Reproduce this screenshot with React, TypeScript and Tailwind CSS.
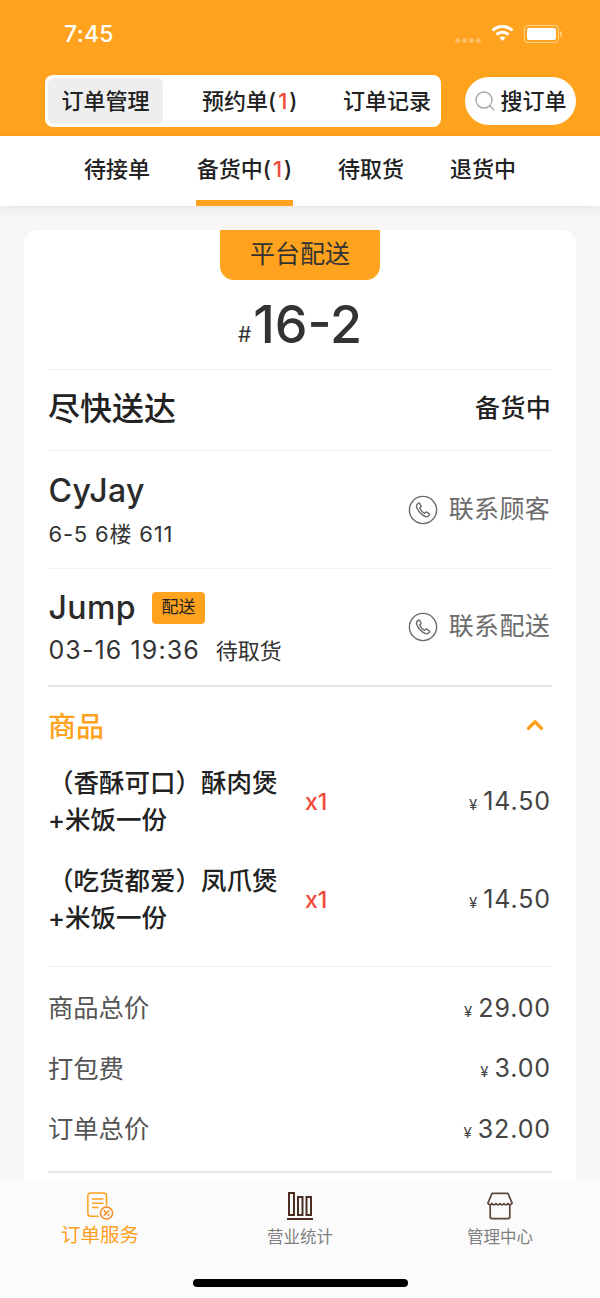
import React from 'react';
import { ChevronUp } from 'lucide-react';

const FONT = "font-['Inter','Noto_Sans_CJK_SC',sans-serif]";

function PhoneIcon() {
  return (
    <svg width="30" height="30" viewBox="0 0 30 30" fill="none" stroke="#6b6b6b" strokeWidth="1.4">
      <circle cx="15" cy="15" r="13.6" />
      <path d="M10.6 8.2c-1.6.8-2.4 2-2 3.7.8 3.6 4.900 8 8.500 9.500 1.700.7 3.300.2 4.300-1.300.3-.5.200-1-.2-1.300l-2.400-1.600c-.5-.3-.9-.2-1.300.2l-.9 1c-2.200-.9-4-3-4.900-5.300l1-.8c.4-.3.500-.8.300-1.200l-1.300-2.600c-.2-.4-.6-.5-1.100-.3z" strokeLinejoin="round" />
    </svg>
  );
}

function Price({ value, className = '' }: { value: string; className?: string }) {
  return (
    <span className={`text-[25px] tracking-[0.9px] pr-[1px] text-[#444] ${className}`}>
      <span className="text-[15px] mr-[5px]">¥</span>
      {value}
    </span>
  );
}

function ContactRow({ label }: { label: string }) {
  return (
    <div className="flex items-center gap-[11px] pr-[2px] text-[25px] tracking-[0.3px] text-[#6b6b6b]">
      <PhoneIcon />
      <span>{label}</span>
    </div>
  );
}

function GoodsItem({ line1, line2 }: { line1: string; line2: string }) {
  return (
    <div className="flex items-center h-[98px]">
      <div className="w-[257px] -mt-[2px] text-[25.500px] leading-[37px] font-medium text-[#222]">
        <div>{line1}</div>
        <div>{line2}</div>
      </div>
      <span className="text-[23px] font-medium text-[#f0493a]">x1</span>
      <Price value="14.50" className="ml-auto" />
    </div>
  );
}

function TotalRow({ label, value }: { label: string; value: string }) {
  return (
    <div className="flex items-center justify-between h-[60.500px] text-[25.300px] text-[#555]">
      <span>{label}</span>
      <Price value={value} />
    </div>
  );
}

function OrderIcon() {
  return (
    <svg width="28" height="28" viewBox="0 0 30 30" fill="none" stroke="#ff9f1e" strokeWidth="1.600" strokeLinecap="round">
      <path d="M13 26H5a3 3 0 0 1-3-3V4a3 3 0 0 1 3-3h14a3 3 0 0 1 3 3v10" />
      <path d="M7 7.500h11M7 12h11M7 16.500h6" />
      <circle cx="22" cy="22.500" r="6.500" stroke="#f58a1f" />
      <path d="M19.500 20l5 5M24.500 20l-5 5" stroke="#f58a1f" />
    </svg>
  );
}

function StatsIcon() {
  return (
    <svg width="26" height="28" viewBox="0 0 26 28" fill="none" stroke="#4a2e22" strokeWidth="2">
      <rect x="2" y="1" width="5" height="22" />
      <rect x="11" y="5" width="4.500" height="18" />
      <rect x="19.500" y="5" width="4.500" height="18" />
      <path d="M0 27h26" />
    </svg>
  );
}

function ShopIcon() {
  return (
    <svg width="28" height="28" viewBox="0 0 30 30" fill="none" stroke="#5c463c" strokeWidth="1.800" strokeLinejoin="round">
      <path d="M6.500 1.500h17l4.500 10.500c-1.200 2-3 2-4.400.4-1.500 1.800-3.200 1.800-4.300 0-1.300 1.800-3.100 1.800-4.300 0-1.300 1.800-3.100 1.800-4.300 0-1.300 1.800-3.100 1.800-4.400-.1C5 14 3.200 14 2 12z" />
      <path d="M4.500 14v12.500a2 2 0 0 0 2 2h17a2 2 0 0 0 2-2V14" />
    </svg>
  );
}

function TabBarItem({ icon, label, active }: { icon: React.ReactNode; label: string; active?: boolean }) {
  return (
    <div className="flex flex-col items-center w-[200px]">
      <div className="h-[29px]">{icon}</div>
      <span className={active ? 'text-[19.500px] leading-[28px] text-[#ff9f1e]' : 'text-[16.500px] leading-[26px] mt-[3px] text-[#808080]'}>
        {label}
      </span>
    </div>
  );
}

export default function App() {
  return (
    <div className={`${FONT} w-[600px] h-[1298px] flex flex-col overflow-hidden bg-[#f6f6f6]`}>
      <header className="h-[136px] shrink-0 bg-[#ffa21d]">
        <div className="h-[75px] pl-[64px] pr-[38px] pt-[19px] flex items-start justify-between text-white">
          <span className="text-[23px] leading-[30px] font-medium tracking-[0.3px]">7:45</span>
          <div className="flex items-center gap-[10px] h-[30px]">
            <div className="flex gap-[2px] mt-[13px]">
              <i className="w-[5px] h-[5px] rounded-full bg-white/30" />
              <i className="w-[5px] h-[5px] rounded-full bg-white/30" />
              <i className="w-[5px] h-[5px] rounded-full bg-white/30" />
              <i className="w-[5px] h-[5px] rounded-full bg-white/30" />
            </div>
            <svg width="23" height="18" viewBox="0 0 23 18" fill="white">
              <path d="M11.500 0C7.200 0 3.300 1.700.5 4.500l2 2.100c2.300-2.300 5.500-3.700 9-3.700s6.700 1.400 9 3.700l2-2.100C19.700 1.700 15.800 0 11.500 0zM4.500 8.600l2 2.100c1.300-1.300 3-2 5-2s3.700.7 5 2l2-2.100c-1.800-1.800-4.300-2.900-7-2.900s-5.200 1.100-7 2.900zM8.500 12.800l3 3.200 3-3.200c-.8-.8-1.800-1.200-3-1.200s-2.200.4-3 1.200z" />
            </svg>
            <div className="flex items-center">
              <div className="w-[35px] h-[18px] rounded-[4px] border border-white/50 p-[2px]">
                <div className="w-full h-full rounded-[2px] bg-white" />
              </div>
              <div className="w-[2px] h-[6px] ml-[1px] bg-white/40 rounded-r" />
            </div>
          </div>
        </div>
        <div className="flex items-center pl-[45px]">
          <div className="w-[396px] h-[52px] bg-white rounded-[8px] p-[3px] flex items-center text-[22px] font-medium text-[#222]">
            <div className="w-[115px] h-[46px] bg-[#eeeeee] rounded-[6px] flex items-center justify-center">订单管理</div>
            <div className="ml-[39px] w-[94px] text-center whitespace-nowrap">
              预约单(<span className="mx-[2px] text-[#f0493a]">1</span>)
            </div>
            <div className="ml-[47px] whitespace-nowrap">订单记录</div>
          </div>
          <div className="ml-[24px] w-[111px] h-[48px] bg-white rounded-full flex items-center justify-center gap-[4px] text-[22px] font-medium text-[#222]">
            <svg width="22" height="22" viewBox="0 0 22 22" fill="none" stroke="#a8a8a8" strokeWidth="1.400">
              <circle cx="10" cy="10" r="8" />
              <path d="M16 16l4 4" strokeLinecap="round" />
            </svg>
            <span>搜订单</span>
          </div>
        </div>
      </header>

      <nav className="h-[70px] shrink-0 bg-white shadow-[0_2px_10px_rgba(0,0,0,0.08)] flex text-[22px] font-medium text-[#222] pl-[84px] relative">
        <div className="w-[66px] pt-[19px] leading-[28px] whitespace-nowrap">待接单</div>
        <div className="ml-[46px] w-[97px] h-full border-b-[6px] border-[#ffa21d] pt-[19px] leading-[28px] whitespace-nowrap text-center">
          备货中(<span className="mx-[2px] text-[#f0493a]">1</span>)
        </div>
        <div className="ml-[45px] w-[66px] pt-[19px] leading-[28px] whitespace-nowrap">待取货</div>
        <div className="ml-[46px] w-[66px] pt-[19px] leading-[28px] whitespace-nowrap">退货中</div>
      </nav>

      <main className="flex-1 min-h-0 overflow-hidden px-[24px] pt-[24px]">
        <div className="bg-white rounded-t-[14px] px-[24px] pb-[40px]">
          <div className="flex justify-center">
            <div className="w-[160px] h-[50px] bg-[#ffa21d] rounded-b-[14px] flex items-center justify-center text-[25px] text-[#333]">
              平台配送
            </div>
          </div>

          <div className="h-[90px] flex items-center justify-center text-[#333] border-b border-[#f0f0f0]">
            <span className="text-[21px] mt-[20px] mr-[2px]">#</span>
            <span className="text-[52px] leading-none font-medium">16-2</span>
          </div>

          <div className="h-[81px] pb-[2px] flex items-center justify-between border-b border-[#f0f0f0]">
            <span className="text-[32px] font-medium text-[#222]">尽快送达</span>
            <span className="text-[25px] pr-[1px] tracking-[0.3px] font-medium text-[#222]">备货中</span>
          </div>

          <div className="h-[118px] flex items-center justify-between border-b border-[#f0f0f0]">
            <div className="pl-[0.5px]">
              <div className="text-[32px] leading-[40px] font-medium tracking-[0.4px] text-[#2b2b2b]">CyJay</div>
              <div className="text-[22px] leading-[30px] mt-[8px] tracking-[0.8px] text-[#333]">6-5 6楼 611</div>
            </div>
            <ContactRow label="联系顾客" />
          </div>

          <div className="h-[118px] flex items-center justify-between border-b-2 border-[#e6e6e6]">
            <div className="pl-[0.5px]">
              <div className="flex items-center h-[40px]">
                <span className="text-[32px] font-medium tracking-[0.4px] text-[#2b2b2b]">Jump</span>
                <span className="ml-[16px] w-[53px] h-[32px] bg-[#ffa21d] rounded-[4px] flex items-center justify-center text-[17px] text-[#222]">
                  配送
                </span>
              </div>
              <div className="flex items-center mt-[8px] h-[30px] text-[#333]">
                <span className="text-[25px] tracking-[1.1px]">03-16 19:36</span>
                <span className="text-[22px] ml-[16px]">待取货</span>
              </div>
            </div>
            <ContactRow label="联系配送" />
          </div>

          <div className="h-[66px] flex items-center justify-between pt-[13px]">
            <span className="text-[28px] font-medium text-[#ffa21d]">商品</span>
            <ChevronUp className="w-[26px] h-[26px] -mt-[4px] mr-[4px] text-[#ff9f1e]" strokeWidth={3} />
          </div>

          <div className="pb-[17px] border-b border-[#f0f0f0]">
            <GoodsItem line1="（香酥可口）酥肉煲" line2="+米饭一份" />
            <GoodsItem line1="（吃货都爱）凤爪煲" line2="+米饭一份" />
          </div>

          <div className="pt-[11px] pb-[11px] border-b-2 border-[#e6e6e6]">
            <TotalRow label="商品总价" value="29.00" />
            <TotalRow label="打包费" value="3.00" />
            <TotalRow label="订单总价" value="32.00" />
          </div>
        </div>
      </main>

      <footer className="h-[118px] shrink-0 bg-[#fbfbfb] relative">
        <div className="flex pt-[12px]">
          <TabBarItem active icon={<OrderIcon />} label="订单服务" />
          <TabBarItem icon={<StatsIcon />} label="营业统计" />
          <TabBarItem icon={<ShopIcon />} label="管理中心" />
        </div>
        <div className="absolute left-[193px] bottom-[11px] w-[215px] h-[8px] rounded-full bg-black" />
      </footer>
    </div>
  );
}
